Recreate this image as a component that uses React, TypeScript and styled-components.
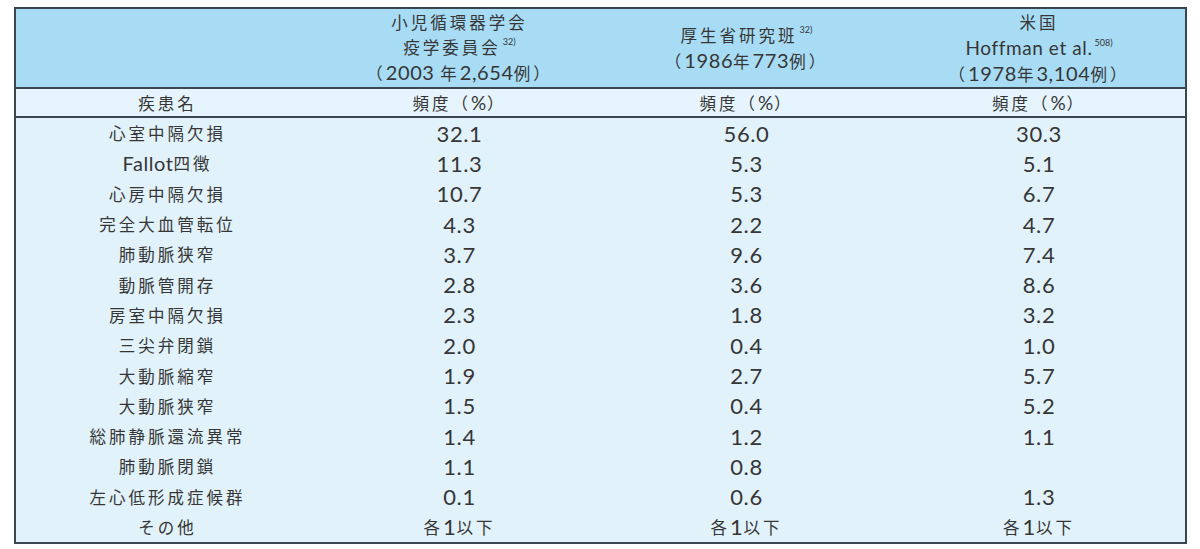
import * as React from "react";
import styled, { createGlobalStyle } from "styled-components";

const Colors = {
    border: "#3b4750",
    head: "#a8dcf5",
    sub: "#e6f5fd",
    body: "#e1f2fb",
    text: "#363636"
};

const GlobalStyle = createGlobalStyle`
    html, body {
        margin: 0;
        padding: 0;
        background: #ffffff;
    }
    body {
        font-family: "Noto Sans CJK JP", "Noto Sans", sans-serif;
        color: ${Colors.text};
    }
`;

const Page = styled.div`
    width: 1200px;
    height: 549px;
    padding: 7px 0 0 14px;
    box-sizing: border-box;
`;

const Table = styled.div`
    width: 1173px;
    border: 2px solid ${Colors.border};
    box-sizing: border-box;
    display: grid;
    grid-template-columns: 300px 284px 290px 295px;
    background: ${Colors.body};
`;

const HeadCell = styled.div`
    height: 78px;
    background: ${Colors.head};
    border-bottom: 2px solid ${Colors.border};
    display: flex;
    flex-direction: column;
    align-items: center;
    justify-content: center;
`;

const HeadLine = styled.div`
    font-size: 16.5px;
    line-height: 25px;
    letter-spacing: 3px;
    padding-left: 3px;
    white-space: nowrap;
`;

// latin letters and digits are set larger and tighter than the kana/kanji
const Lat = styled.span<{ $size?: number }>`
    font-family: Lato, "Noto Sans", sans-serif;
    font-size: ${(p) => p.$size ?? 20}px;
    letter-spacing: 0.6px;
`;

const Sup = styled.sup`
    font-family: Lato, "Noto Sans", sans-serif;
    font-size: 9px;
    letter-spacing: 0;
    vertical-align: 9px;
    line-height: 0;
    margin-left: 2px;
`;

const SubCell = styled.div`
    height: 27px;
    background: ${Colors.sub};
    border-bottom: 2px solid ${Colors.border};
    display: flex;
    align-items: center;
    justify-content: center;
    font-size: 16.5px;
    letter-spacing: 3px;
    padding-left: 3px;
`;

const Cell = styled.div<{ $last?: boolean }>`
    height: ${(p) => (p.$last ? "30px" : "30.3px")};
    display: flex;
    align-items: center;
    justify-content: center;
    font-size: 16.5px;
    letter-spacing: 3px;
    padding-left: 3px;
    white-space: nowrap;
`;

function Mixed({ text, size }: { text: string; size?: number }) {
    const parts = text.match(/[\x20-\x7e]+|[^\x20-\x7e]+/g) ?? [];
    return (
        <>
            {parts.map((p, i) =>
                /^[\x20-\x7e]+$/.test(p) ? (
                    <Lat key={i} $size={size}>
                        {p}
                    </Lat>
                ) : (
                    <React.Fragment key={i}>{p}</React.Fragment>
                )
            )}
        </>
    );
}

const rows: [string, string, string, string][] = [
    ["心室中隔欠損", "32.1", "56.0", "30.3"],
    ["Fallot四徴", "11.3", "5.3", "5.1"],
    ["心房中隔欠損", "10.7", "5.3", "6.7"],
    ["完全大血管転位", "4.3", "2.2", "4.7"],
    ["肺動脈狭窄", "3.7", "9.6", "7.4"],
    ["動脈管開存", "2.8", "3.6", "8.6"],
    ["房室中隔欠損", "2.3", "1.8", "3.2"],
    ["三尖弁閉鎖", "2.0", "0.4", "1.0"],
    ["大動脈縮窄", "1.9", "2.7", "5.7"],
    ["大動脈狭窄", "1.5", "0.4", "5.2"],
    ["総肺静脈還流異常", "1.4", "1.2", "1.1"],
    ["肺動脈閉鎖", "1.1", "0.8", ""],
    ["左心低形成症候群", "0.1", "0.6", "1.3"],
    ["その他", "各1以下", "各1以下", "各1以下"]
];

export default function App() {
    return (
        <Page>
            <GlobalStyle />
            <Table>
                <HeadCell />
                <HeadCell>
                    <HeadLine>小児循環器学会</HeadLine>
                    <HeadLine>
                        疫学委員会<Sup>32)</Sup>
                    </HeadLine>
                    <HeadLine>
                        <Mixed text="（2003 年2,654例）" size={20} />
                    </HeadLine>
                </HeadCell>
                <HeadCell>
                    <HeadLine>
                        厚生省研究班<Sup>32)</Sup>
                    </HeadLine>
                    <HeadLine>
                        <Mixed text="（1986年773例）" size={20} />
                    </HeadLine>
                </HeadCell>
                <HeadCell>
                    <HeadLine>米国</HeadLine>
                    <HeadLine>
                        <Lat $size={19}>Hoffman et al.</Lat>
                        <Sup>508)</Sup>
                    </HeadLine>
                    <HeadLine>
                        <Mixed text="（1978年3,104例）" size={20} />
                    </HeadLine>
                </HeadCell>

                <SubCell>疾患名</SubCell>
                <SubCell>
                    頻度（<Lat $size={19}>%</Lat>）
                </SubCell>
                <SubCell>
                    頻度（<Lat $size={19}>%</Lat>）
                </SubCell>
                <SubCell>
                    頻度（<Lat $size={19}>%</Lat>）
                </SubCell>

                {rows.map((r, i) =>
                    r.map((v, j) => (
                        <Cell key={`${i}-${j}`} $last={i === rows.length - 1}>
                            <Mixed text={v} size={j === 0 ? 20 : 22} />
                        </Cell>
                    ))
                )}
            </Table>
        </Page>
    );
}
